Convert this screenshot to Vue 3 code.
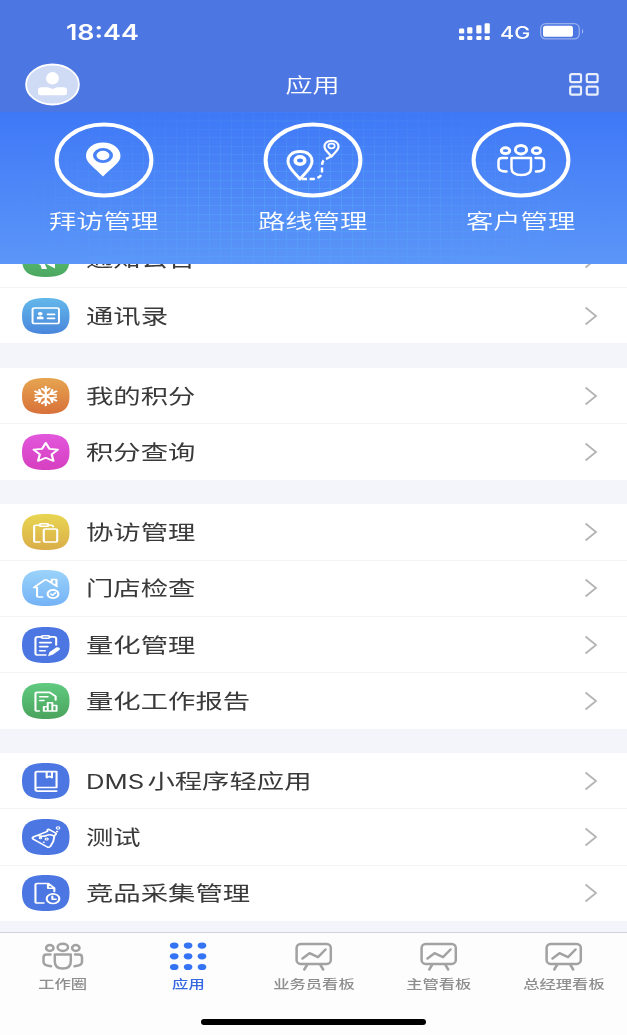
<script setup>
const groups = [
  [
    { name: '通知公告', icon: 'notice', from: '#63c77e', to: '#4aa75f' },
    { name: '通讯录', icon: 'contact', from: '#63b8ea', to: '#4a86dc' },
  ],
  [
    { name: '我的积分', icon: 'snow', from: '#e6a550', to: '#d8713a' },
    { name: '积分查询', icon: 'star', from: '#e257dc', to: '#d63fc0' },
  ],
  [
    { name: '协访管理', icon: 'copy', from: '#e9d552', to: '#d9ae48' },
    { name: '门店检查', icon: 'house', from: '#9bd3fa', to: '#74b2f6' },
    { name: '量化管理', icon: 'edit', from: '#4c76e1', to: '#4c76e1' },
    { name: '量化工作报告', icon: 'report', from: '#60cb80', to: '#4ba35c' },
  ],
  [
    { prefix: 'DMS', name: '小程序轻应用', icon: 'book', from: '#4c76e1', to: '#4c76e1' },
    { name: '测试', icon: 'flask', from: '#4c76e1', to: '#4c76e1' },
    { name: '竞品采集管理', icon: 'file', from: '#4c76e1', to: '#4c76e1' },
  ],
]
const shortcuts = [
  { name: '拜访管理', icon: 'pin' },
  { name: '路线管理', icon: 'route' },
  { name: '客户管理', icon: 'people' },
]
const tabs = [
  { name: '工作圈', icon: 'people' },
  { name: '应用', icon: 'dots', active: true },
  { name: '业务员看板', icon: 'board' },
  { name: '主管看板', icon: 'board' },
  { name: '总经理看板', icon: 'board' },
]
</script>

<template>
  <div class="phone">
    <header class="top">
      <div class="status">
        <span class="time">18:44</span>
        <div class="signals">
          <svg class="bars" width="32" height="18" viewBox="0 0 32 18" fill="#fff">
            <rect x="0" y="5.5" width="5.2" height="5" rx="1.2" /><rect x="8.2" y="4.2" width="5.2" height="6.300" rx="1.2" />
            <rect x="17.3" y="2.3" width="5.2" height="8.200" rx="1.2" /><rect x="25.6" y="0.2" width="5.2" height="10.300" rx="1.2" />
            <rect x="0" y="13" width="5.2" height="4" rx="1" /><rect x="8.2" y="13" width="5.2" height="4" rx="1" />
            <rect x="17.3" y="13" width="5.2" height="4" rx="1" /><rect x="25.6" y="13" width="5.2" height="4" rx="1" />
          </svg>
          <span class="net">4G</span>
          <svg class="battery" width="45" height="17" viewBox="0 0 45 17">
            <rect x="0.7" y="0.7" width="38.6" height="15.2" rx="5" fill="none" stroke="#fff" stroke-opacity=".42" stroke-width="1.3" />
            <rect x="3" y="2.8" width="30" height="11" rx="2.6" fill="#fff" />
            <path d="M42 5.8q2.4 2.6 0 5.2z" fill="#fff" fill-opacity=".5" />
          </svg>
        </div>
      </div>
      <div class="nav">
        <svg class="avatar" width="56" height="43" viewBox="0 0 56 43">
          <ellipse cx="27.500" cy="21.5" rx="26.4" ry="20" fill="#cfdbf5" stroke="#fff" stroke-width="1.8" />
          <ellipse cx="27.500" cy="15.300" rx="6.4" ry="6.2" fill="#fff" />
          <path d="M13 27q0-2.500 3.500-2.700h6.500l4.600 1.700 4.400-1.700h6.500q3.500.2 3.500 2.700v3q0 2.200-3 2.200H16q-3 0-3-2.200z" fill="#fff" />
        </svg>
        <h1 class="wide">应用</h1>
        <svg class="apps" width="30" height="23" viewBox="0 0 30 23" fill="none" stroke="#fff" stroke-opacity=".88" stroke-width="2.2">
          <rect x="1.200" y="1.200" width="10.800" height="8" rx="1.400" /><rect x="17.800" y="1.200" width="10.800" height="8" rx="1.400" />
          <rect x="1.200" y="13.600" width="10.800" height="8" rx="1.400" /><rect x="17.800" y="13.600" width="10.800" height="8" rx="1.400" />
        </svg>
      </div>
    </header>

    <section class="banner">
      <div v-for="s in shortcuts" :key="s.name" class="shortcut">
        <svg width="100" height="76" viewBox="0 0 100 76" fill="none" stroke="#fff" stroke-linecap="round" stroke-linejoin="round">
          <ellipse cx="50" cy="38" rx="47.400" ry="35.400" stroke-width="4" />
          <path v-if="s.icon === 'pin'" fill="#fff" stroke="none" fill-rule="evenodd" d="M49 20.500c-10 0-17 6-17 13.500 0 7 8 11 17 20.500 9-9.500 17.500-13.500 17.500-20.500 0-7.500-7.500-13.500-17.500-13.500zm0 5.500a10 7.500 0 1 1 0 15 10 7.500 0 0 1 0-15zm0 2.800a6.500 4.700 0 1 0 0 9.400 6.500 4.700 0 0 0 0-9.400z" />
          <g v-else-if="s.icon === 'route'">
            <path stroke-width="3" d="M37 57c-5-6-12-11-12-17.500C25 33 30 29.500 37 29.500s12 3.500 12 10C49 46 42 51 37 57z" />
            <ellipse cx="37" cy="38.500" rx="4.800" ry="3.700" stroke-width="3.600" />
            <path stroke-width="2.200" d="M68.500 34.500c-3-4-7-6-7-10 0-3.700 3-5.700 7-5.700s7 2 7 5.700c0 4-4 6-7 10z" />
            <ellipse cx="68.500" cy="24" rx="3.200" ry="2.300" stroke-width="1.700" />
            <path stroke-width="2.400" stroke-linecap="butt" stroke-dasharray="5 2.600" d="M39 57h11q8-1 9-6v-7q0-6 4-7l5-2.500" />
          </g>
          <g v-else stroke-width="3">
            <ellipse cx="50" cy="27.700" rx="5.600" ry="4.200" /><ellipse cx="34.500" cy="28.700" rx="4.200" ry="2.900" /><ellipse cx="65.500" cy="28.700" rx="4.200" ry="2.900" />
            <path stroke-width="2.500" d="M40.500 36h19.500v10q0 7-9.700 7t-9.800-7zM36 36h-5q-3.500 0-3.500 3v6q0 4.500 8 4.500M64.500 36h5q3.500 0 3.500 3v6q0 4.500-8 4.500" />
          </g>
        </svg>
        <span class="wide">{{ s.name }}</span>
      </div>
    </section>

    <main class="list">
      <div v-for="(g, i) in groups" :key="i" class="group">
        <div v-for="r in g" :key="r.name" class="row">
          <svg class="icon" viewBox="0 0 36 36" preserveAspectRatio="none" fill="none" stroke="#fff" stroke-width="1.500" stroke-linecap="round" stroke-linejoin="round">
            <defs>
              <linearGradient :id="'bg-' + r.icon" x1="0" y1="0" x2="0" y2="1">
                <stop offset="0" :stop-color="r.from" /><stop offset="1" :stop-color="r.to" />
              </linearGradient>
            </defs>
            <path :fill="`url(#bg-${r.icon})`" stroke="none" d="M0 18C0 5 5 0 18 0S36 5 36 18 31 36 18 36 0 31 0 18Z" />
            <path v-if="r.icon === 'notice'" fill="#fff" stroke="none" d="M9 13l16-6v20.500l-5-3.500-3-2 2 6h-4l-1-4-5-3z" />
            <g v-else-if="r.icon === 'contact'">
              <rect x="8" y="10" width="20" height="15.600" rx="1.600" />
              <circle cx="13.800" cy="15.800" r="1.800" fill="#fff" stroke="none" />
              <path fill="#fff" stroke="none" d="M11.300 21.300v-1.600q0-1.500 2.500-1.500t2.500 1.500v1.600z" />
              <path d="M19.500 16.300h5M19.500 20.300h5" stroke-width="1.700" />
            </g>
            <g v-else-if="r.icon === 'snow'" stroke-width="1.700">
              <path v-for="a in 6" :key="a" :transform="`rotate(${a * 60} 18 18)`" d="M18 18V8.700M15.200 10.700l2.800 3 2.800-3" />
            </g>
            <path v-else-if="r.icon === 'star'" stroke-width="1.700" d="M18 8.800l2.800 6 6.400.9-4.700 4.600 1.300 6.600-5.800-3.100-5.800 3.100 1.300-6.600-4.700-4.600 6.400-.9z" />
            <g v-else-if="r.icon === 'copy'" stroke-width="1.600">
              <path d="M13.500 28h-3q-1.300 0-1.300-1.300V12.600q0-1.400 1.300-1.400h3M20 11.200h2.300q1.200 0 1.200 1.400" />
              <rect x="13.500" y="9.700" width="6.500" height="2.500" rx=".8" /><rect x="16.500" y="15" width="10.200" height="13" rx="1.500" />
            </g>
            <g v-else-if="r.icon === 'house'" stroke-width="1.600">
              <path d="M15.500 27h-3.100q-1 0-1-1v-8.500H9l8-7.300q1-.8 2 0l7.500 6.300M22.500 12V9.500h3.600v6" />
              <circle cx="23.500" cy="24" r="4.100" /><path d="M21.800 24l1.300 1.300 2.300-2.500" stroke-width="1.300" />
            </g>
            <g v-else-if="r.icon === 'edit'" stroke-width="1.600">
              <path d="M18 28h-6q-1.800 0-1.800-1.800V11.700q0-1.800 1.800-1.800h3M21 9.900h3.100q1.800 0 1.800 1.800V18" />
              <rect x="14.700" y="8.700" width="6.300" height="2.500" rx="1.200" />
              <path d="M13.500 15.600h8.500M13.500 19.600h6M13.500 23.700h4" />
              <path fill="#fff" stroke="none" d="M19.700 29.200l1.200-4.200 5.300-4.800q2.700-.3 2.500 2.200l-5.100 5z" />
            </g>
            <g v-else-if="r.icon === 'report'" stroke-width="1.600">
              <path d="M13 28h-1.500q-1.300 0-1.300-1.300V11q0-1.600 1.300-1.600h9.500l4.500 4v3.500M13.500 13.700h6M13.500 17.500h3" />
              <path stroke-width="1.500" d="M16.500 28v-4.300h3V28zm3 0v-8.300H23V28zm3.500 0v-5.600h3.200V28z" />
            </g>
            <g v-else-if="r.icon === 'book'" stroke-width="1.600">
              <path d="M10.200 26.500V9.800q0-1.200 1.200-1.200h14.800V24.500H12q-1.800 0-1.800 1.800t1.800 1.800h14.200M18.700 8.800v5.800l2-1.300 2 1.300V8.800" />
            </g>
            <g v-else-if="r.icon === 'flask'" stroke-width="1.500">
              <path d="M19.300 12.300q-.5-2 1-2l5.200 3.700q1 1.500-.8 2.200l-1 6.300-2.200 4.900q-1 1.400-2.300.6L8.500 20.200q-1.200-1.200 0-2.200l5-2.600zM12.500 16.500q3 1.500 6 0t5.500.5" />
              <circle cx="14" cy="19" r=".8" stroke-width="1" /><circle cx="18.700" cy="20" r="1.100" stroke-width="1" /><path d="M16.500 23.200h.1" />
              <circle cx="27.300" cy="9" r="1.300" stroke-width="1" /><circle cx="26.600" cy="12.600" r=".5" stroke-width=".8" />
            </g>
            <g v-else stroke-width="1.600">
              <path d="M16.500 28h-5q-1.300 0-1.300-1.300V10q0-1.500 1.300-1.500h8.500l4.500 4.500v3.500M19.700 9v4.300h4" />
              <circle cx="23.500" cy="23.700" r="4.800" /><path d="M23 21.200v3h2.700" />
            </g>
          </svg>
          <span class="wide label"><span v-if="r.prefix" class="latin">{{ r.prefix }}</span>{{ r.name }}</span>
          <svg class="chev" width="14" height="20" viewBox="0 0 14 20" fill="none" stroke="#b4b4b6" stroke-width="1.800"><path d="M1.500 1.500L12 10 1.500 18.500" /></svg>
        </div>
      </div>
    </main>

    <footer class="tabbar">
      <div class="tabs">
        <div v-for="t in tabs" :key="t.name" class="tab" :class="{ active: t.active }">
          <svg width="42" height="30" viewBox="0 0 42 30" fill="none" stroke="#a2a2a2" stroke-width="2.500" stroke-linejoin="round" stroke-linecap="round">
            <g v-if="t.icon === 'people'">
              <ellipse cx="20.800" cy="6.300" rx="5.200" ry="3.600" /><ellipse cx="7.800" cy="7" rx="3.700" ry="2.900" /><ellipse cx="33.800" cy="7" rx="3.700" ry="2.900" />
              <path d="M12.800 13.500h16v7q0 7-8 7t-8-7zM8.500 13.500h-4q-3 0-3 3V21q0 3.500 7.500 4.300M33 13.500h4q3 0 3 3V21q0 3.500-7.500 4.300" />
            </g>
            <g v-else-if="t.icon === 'dots'" fill="#3474f4" stroke="none">
              <template v-for="y in 3" :key="y">
                <ellipse v-for="x in 3" :key="x" :cx="7.200 + (x - 1) * 13.900" :cy="4.600 + (y - 1) * 10.700" rx="4.300" ry="3.100" />
              </template>
            </g>
            <g v-else>
              <rect x="3.600" y="2.900" width="34.200" height="20" rx="4" />
              <path d="M9.500 17.500l7-5.300 8.500 4L32.500 8.500M14 24l-2.700 4.500M27.500 24l2.700 4.500" />
            </g>
          </svg>
          <span class="wide">{{ t.name }}</span>
        </div>
      </div>
      <div class="home"></div>
    </footer>
  </div>
</template>

<style>
html, body { margin: 0; overflow: hidden; }
</style>

<style scoped>
.phone {
  width: 627px; height: 1035px; display: flex; flex-direction: column; overflow: hidden;
  background: #f4f5fa; font-family: "Noto Sans CJK SC", sans-serif; color: #3a3a3a;
}
.wide { display: inline-block; white-space: nowrap; transform: scaleX(1.315); }
.top { height: 112px; flex: none; background: #4c76e1; color: #fff; }
.status { height: 62px; display: flex; justify-content: space-between; padding: 0 42px 0 66px; }
.time {
  font: 600 22px/28px Inter, sans-serif; margin-top: 18px; height: 28px;
  transform: scaleX(1.22); transform-origin: left;
}
.signals { display: flex; align-items: flex-start; padding-top: 23px; }
.net { font: 500 17.500px/22px Inter, sans-serif; margin: -1.500px 0 0 9.500px; width: 40px; transform: scaleX(1.23); transform-origin: left; }
.bars, .battery { display: block; }
.nav { height: 44px; display: flex; align-items: center; justify-content: space-between; padding: 0 28px 0 25px; }
.nav h1 { margin: 0 24px 0 0; font-size: 20.600px; line-height: 30px; font-weight: 350; }
.banner {
  position: relative; height: 152px; box-sizing: border-box; flex: none; color: #fff;
  background: linear-gradient(#3f78f6, #5b96f8); display: flex; justify-content: space-between; padding: 0 2px 0 0;
}
.banner::before {
  content: ""; position: absolute; inset: 0;
  background:
    repeating-linear-gradient(90deg, rgba(90, 185, 250, .32) 0 1px, transparent 1px 11px),
    repeating-linear-gradient(rgba(90, 185, 250, .32) 0 1px, transparent 1px 8.500px);
  mask-image: radial-gradient(ellipse 50% 75% at 48% 60%, #000 10%, transparent 100%);
}
.shortcut { position: relative; width: 208px; display: flex; flex-direction: column; align-items: center; padding-top: 10px; }
.shortcut .wide { font-size: 20.800px; line-height: 30px; margin-top: 6.500px; font-weight: 350; }
.list { flex: 1; overflow: hidden; }
.group { background: #fff; margin-bottom: 24.600px; }
.group:first-child { margin-top: -32.300px; }
.row { height: 56.300px; box-sizing: border-box; border-bottom: 1.500px solid #f3f4f7; display: flex; align-items: center; padding: 0 29px 0 22px; }
.row:last-child { height: 55.400px; border-bottom: 0; }
.icon { width: 47.500px; height: 36px; flex: none; }
.label { font-size: 20.800px; line-height: 30px; margin: -2px 0 0 16px; transform-origin: left; }
.latin { font: 400 19.500px/1 Inter, sans-serif; margin-right: 2.500px; }
.chev { margin-left: auto; }
.tabbar { height: 103px; box-sizing: border-box; flex: none; background: #fdfdfe; border-top: 1.500px solid #d2d3da; }
.tabs { display: flex; height: 86px; }
.tab { flex: 1; display: flex; flex-direction: column; align-items: center; padding-top: 7.500px; color: #8e8e8e; }
.tab .wide { font-size: 12.400px; line-height: 18px; margin-top: 4px; font-weight: 500; }
.tab.active { color: #3768e0; }
.home { width: 225px; height: 6px; border-radius: 3px; background: #000; margin: 0 auto; }
</style>
